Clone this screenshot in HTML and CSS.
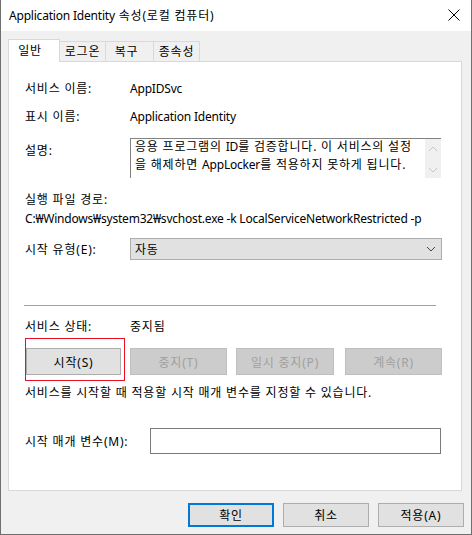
FILE: index.html
```html
<!DOCTYPE html>
<html lang="ko">

<head>
  <meta charset="UTF-8">
  <title>Application Identity 속성(로컬 컴퓨터)</title>
  <link rel="stylesheet" href="styles.css">
</head>

<body>
  <div class="window">
    <div class="titlebar">
      <span class="title"><span class="lat">Application Identity</span> 속성(로컬 컴퓨터)</span>
      <svg class="close" width="12" height="12" viewBox="0 0 12 12">
        <path d="M0.5 0.5 L11.5 11.5 M11.5 0.5 L0.5 11.5" stroke="#000" stroke-width="1" fill="none"/>
      </svg>
    </div>

    <div class="body">
      <div class="tabs">
        <div class="tab active">일반</div>
        <div class="tab t2">로그온</div>
        <div class="tab t3">복구</div>
        <div class="tab t4">종속성</div>
      </div>

      <div class="panel">
        <div class="row r1">
          <span class="label">서비스 이름:</span>
          <span class="value lat">AppIDSvc</span>
        </div>
        <div class="row r2">
          <span class="label">표시 이름:</span>
          <span class="value lat">Application Identity</span>
        </div>
        <div class="row desc-row">
          <span class="label desc-label">설명:</span>
          <div class="desc">
            <div class="desc-text">
              <div>응용 프로그램의 <span class="lat">ID</span>를 검증합니다. 이 서비스의 설정</div>
              <div>을 해제하면 <span class="lat">AppLocker</span>를 적용하지 못하게 됩니다.</div>
            </div>
            <div class="scroll">
              <svg width="10" height="6" viewBox="0 0 10 6"><path d="M1 5 L5 1 L9 5" stroke="#c8c8c8" fill="none"/></svg>
              <svg width="10" height="6" viewBox="0 0 10 6"><path d="M1 1 L5 5 L9 1" stroke="#c8c8c8" fill="none"/></svg>
            </div>
          </div>
        </div>

        <div class="line exe-label">실행 파일 경로:</div>
        <div class="line exe-path lat">C:₩Windows₩system32₩svchost.exe -k LocalServiceNetworkRestricted -p</div>

        <div class="row combo-row">
          <span class="label">시작 유형(E):</span>
          <div class="combo">
            <span>자동</span>
            <svg width="10" height="6" viewBox="0 0 10 6"><path d="M1 1 L5 5 L9 1" stroke="#444" fill="none"/></svg>
          </div>
        </div>

        <div class="separator"></div>

        <div class="row status-row">
          <span class="label">서비스 상태:</span>
          <span class="value">중지됨</span>
        </div>

        <div class="svc-buttons">
          <button class="btn b-start">시작(S)</button>
          <button class="btn off b-stop">중지(T)</button>
          <button class="btn off b-pause">일시 중지(P)</button>
          <button class="btn off b-resume">계속(R)</button>
          <div class="highlight"></div>
        </div>

        <div class="line hint">서비스를 시작할 때 적용할 시작 매개 변수를 지정할 수 있습니다.</div>

        <div class="row param-row">
          <span class="label param-label">시작 매개 변수(M):</span>
          <div class="param-input"></div>
        </div>
      </div>

      <div class="footer">
        <button class="btn dlg default">확인</button>
        <button class="btn dlg">취소</button>
        <button class="btn dlg">적용(A)</button>
      </div>
    </div>
  </div>
</body>

</html>
```

FILE: styles.css
```css
body {
  margin: 0;
  font-family: "Noto Sans", "Noto Sans CJK KR", sans-serif;
  font-size: 12px;
  letter-spacing: 0.8px;
  color: #000;
  background: #fff;
}

.lat {
  letter-spacing: -0.2px;
}

.window {
  width: 470px;
  height: 534px;
  border: 1px solid #6f6f6f;
  border-top: none;
  background: #f0f0f0;
  overflow: hidden;
}

.titlebar {
  height: 31px;
  background: #fff;
  display: flex;
  align-items: center;
  justify-content: space-between;
  padding: 0 11px 0 8px;
}

.title {
  font-size: 12px;
  margin-top: -1px;
}

.close {
  margin-top: -2px;
}

.body {
  padding: 0 0 0 7px;
}

.tabs {
  display: flex;
  align-items: flex-end;
  height: 30px;
}

.tab {
  height: 20px;
  line-height: 19px;
  background: #f0f0f0;
  border: 1px solid #d9d9d9;
  border-bottom: none;
  border-left: none;
  text-align: center;
  box-sizing: border-box;
}

.tab.active {
  height: 23px;
  width: 52px;
  background: #fff;
  border-left: 1px solid #d9d9d9;
  line-height: 22px;
  margin-bottom: -1px;
  position: relative;
  z-index: 1;
  padding-right: 8px;
}

.t2 { width: 46px; }
.t3 { width: 48px; padding-right: 6px; }
.t4 { width: 46px; }

.panel {
  width: 436px;
  height: 428px;
  background: #fff;
  border: 1px solid #d9d9d9;
  padding: 0 0 0 16px;
}

.row {
  display: flex;
  align-items: center;
}

.label {
  width: 105px;
  flex: none;
}

.r1 {
  height: 20px;
  margin-top: 16px;
}

.r2 {
  height: 20px;
  margin-top: 8px;
}

.desc-row {
  margin-top: 12px;
  align-items: flex-start;
}

.desc-label {
  line-height: 20px;
  padding-top: 3px;
}

.desc {
  width: 311px;
  height: 40px;
  box-sizing: border-box;
  border-top: 1px solid #828282;
  border-left: 1px solid #828282;
  display: flex;
}

.desc-text {
  flex: 1;
  padding: 0 0 0 4px;
  margin-top: -1px;
  line-height: 18px;
  white-space: nowrap;
  overflow: hidden;
}

.scroll {
  width: 16px;
  flex: none;
  background: #f0f0f0;
  display: flex;
  flex-direction: column;
  align-items: center;
  justify-content: space-between;
  padding: 7px 0 5px;
  box-sizing: border-box;
}

.line {
  height: 19px;
  line-height: 19px;
}

.exe-label {
  margin-top: 12px;
}

.combo-row {
  margin-top: 10px;
}

.combo {
  width: 312px;
  height: 22px;
  box-sizing: border-box;
  background: #e1e1e1;
  border: 1px solid #adadad;
  display: flex;
  align-items: center;
  justify-content: space-between;
  padding: 0 5px 0 4px;
}

.separator {
  width: 412px;
  height: 1px;
  background: #a0a0a0;
  margin-top: 45px;
  margin-left: -1px;
}

.status-row {
  height: 20px;
  margin-top: 10px;
}

.svc-buttons {
  position: relative;
  display: flex;
  gap: 9px;
  margin-top: 12px;
  padding-left: 1px;
}

.btn {
  font-family: inherit;
  font-size: 12px;
  letter-spacing: 0.8px;
  color: #000;
  background: #e1e1e1;
  border: 1px solid #adadad;
  height: 27px;
  padding: 0;
  box-sizing: border-box;
}

.btn.off {
  background: #cccccc;
  border-color: #bfbfbf;
  color: #a0a0a0;
}

.b-start { width: 95px; }
.b-stop { width: 97px; }
.b-pause { width: 98px; }
.b-resume { width: 97px; margin-left: 2px; }

.highlight {
  position: absolute;
  left: 0;
  top: -10px;
  width: 100px;
  height: 43px;
  box-sizing: border-box;
  border: 1px solid #e81123;
}

.hint {
  margin-top: 8px;
}

.param-row {
  margin-top: 26px;
}

.param-label {
  width: 125px;
}

.param-input {
  width: 291px;
  height: 26px;
  box-sizing: border-box;
  border: 1px solid #7a7a7a;
  background: #fff;
}

.footer {
  display: flex;
  justify-content: flex-end;
  gap: 9px;
  padding: 12px 7px 0 0;
}

.btn.dlg {
  width: 86px;
  height: 24px;
}

.btn.default {
  border: 2px solid #0078d7;
}
```
